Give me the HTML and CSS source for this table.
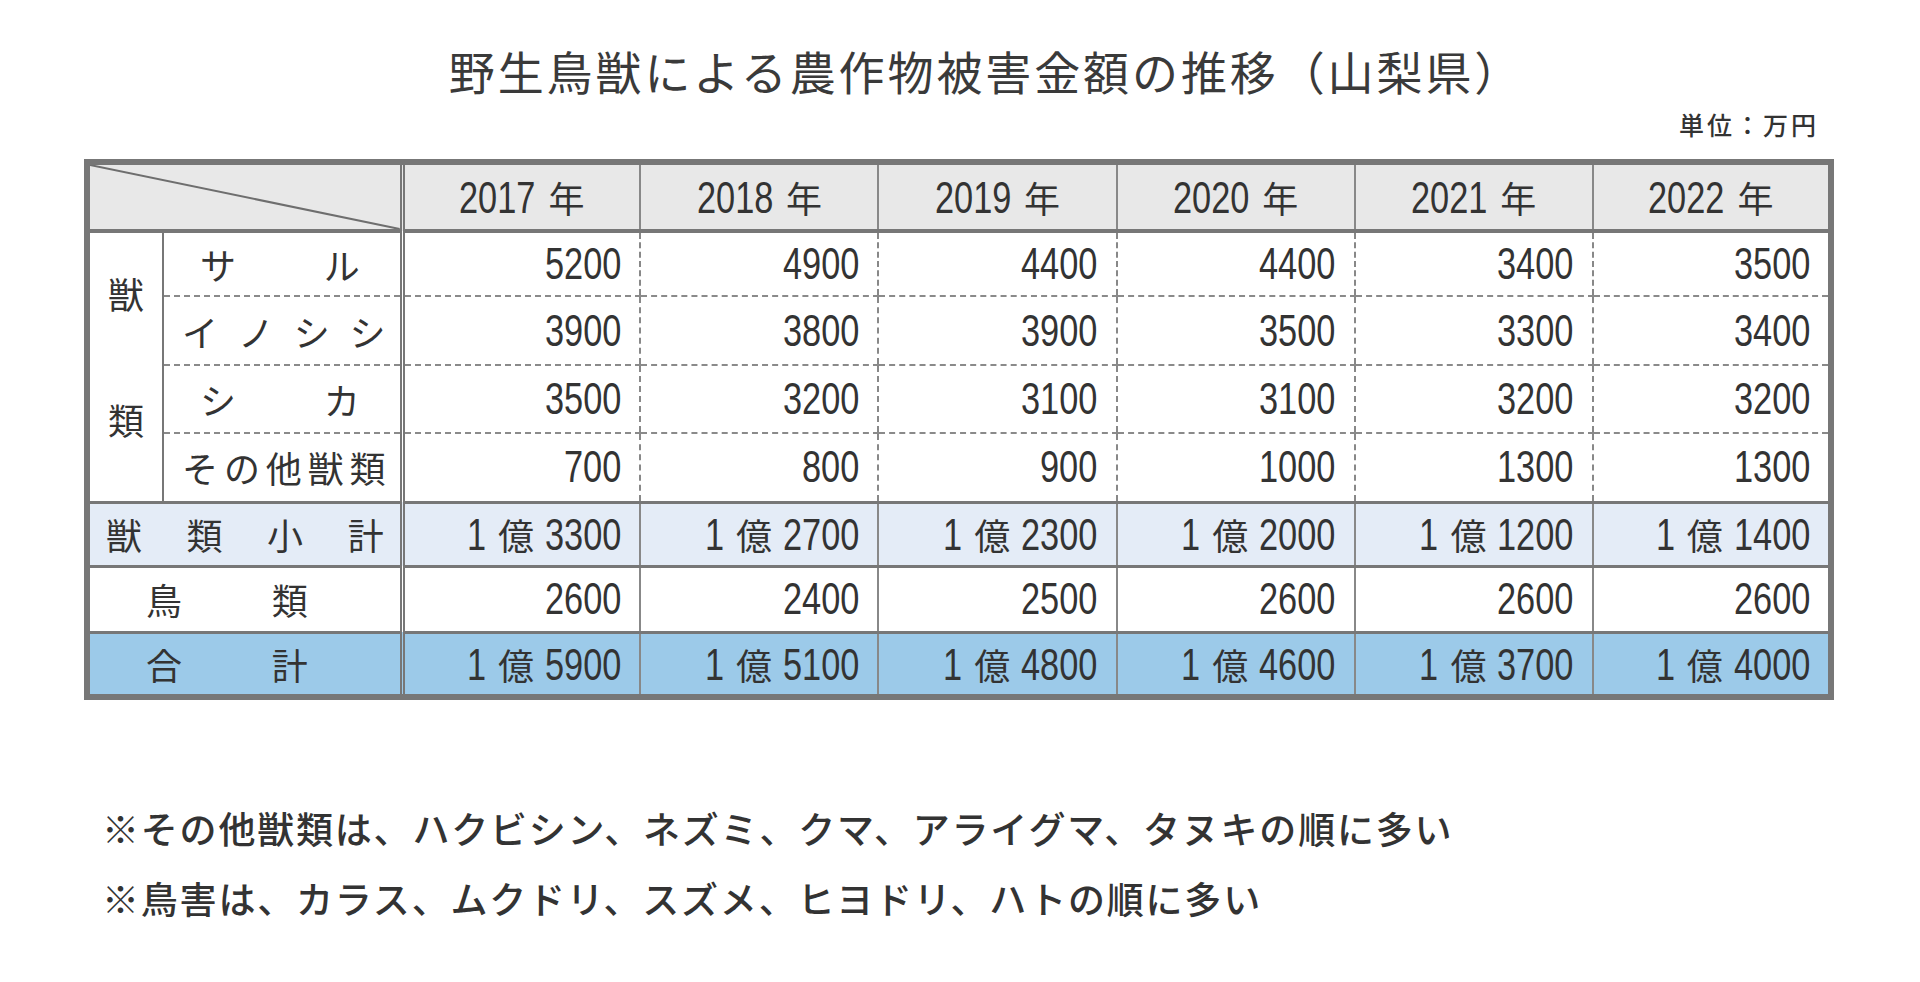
FILE: index.html
```html
<!DOCTYPE html>
<html lang="ja">
<head>
<meta charset="utf-8">
<title>野生鳥獣による農作物被害金額の推移（山梨県）</title>
<link rel="stylesheet" href="styles.css">
</head>
<body>
<div class="page">
  <h1 class="title">野生鳥獣による農作物被害金額の推移（山梨県）</h1>
  <div class="unit">単位：万円</div>
  <table class="damage">
    <colgroup>
      <col class="c-grp"><col class="c-lbl">
      <col class="c-year"><col class="c-year"><col class="c-year"><col class="c-year"><col class="c-year"><col class="c-year">
    </colgroup>
    <thead>
      <tr class="r-head">
        <th colspan="2" class="corner">
          <svg class="diag" viewBox="0 0 100 100" preserveAspectRatio="none"><line x1="0" y1="0" x2="100" y2="100" vector-effect="non-scaling-stroke"/></svg>
        </th>
        <th class="year"><span class="n d4">2017</span><span class="nen">年</span></th>
        <th class="year"><span class="n d4">2018</span><span class="nen">年</span></th>
        <th class="year"><span class="n d4">2019</span><span class="nen">年</span></th>
        <th class="year"><span class="n d4">2020</span><span class="nen">年</span></th>
        <th class="year"><span class="n d4">2021</span><span class="nen">年</span></th>
        <th class="year"><span class="n d4">2022</span><span class="nen">年</span></th>
      </tr>
    </thead>
    <tbody>
      <tr class="r-animal r1">
        <th rowspan="4" class="grp"><div class="grp-in"><span>獣</span><span>類</span></div></th>
        <th class="lbl"><div class="spread sp-2"><span>サ</span><span>ル</span></div></th>
        <td class="num"><span class="n d4">5200</span></td><td class="num"><span class="n d4">4900</span></td><td class="num"><span class="n d4">4400</span></td><td class="num"><span class="n d4">4400</span></td><td class="num"><span class="n d4">3400</span></td><td class="num"><span class="n d4">3500</span></td>
      </tr>
      <tr class="r-animal r2">
        <th class="lbl"><div class="spread sp-4"><span>イ</span><span>ノ</span><span>シ</span><span>シ</span></div></th>
        <td class="num"><span class="n d4">3900</span></td><td class="num"><span class="n d4">3800</span></td><td class="num"><span class="n d4">3900</span></td><td class="num"><span class="n d4">3500</span></td><td class="num"><span class="n d4">3300</span></td><td class="num"><span class="n d4">3400</span></td>
      </tr>
      <tr class="r-animal r3">
        <th class="lbl"><div class="spread sp-2"><span>シ</span><span>カ</span></div></th>
        <td class="num"><span class="n d4">3500</span></td><td class="num"><span class="n d4">3200</span></td><td class="num"><span class="n d4">3100</span></td><td class="num"><span class="n d4">3100</span></td><td class="num"><span class="n d4">3200</span></td><td class="num"><span class="n d4">3200</span></td>
      </tr>
      <tr class="r-animal r4">
        <th class="lbl"><div class="spread sp-4"><span>そ</span><span>の</span><span>他</span><span>獣</span><span>類</span></div></th>
        <td class="num"><span class="n d3">700</span></td><td class="num"><span class="n d3">800</span></td><td class="num"><span class="n d3">900</span></td><td class="num"><span class="n d4">1000</span></td><td class="num"><span class="n d4">1300</span></td><td class="num"><span class="n d4">1300</span></td>
      </tr>
      <tr class="r-sub">
        <th colspan="2" class="lbl"><div class="spread sp-sub"><span>獣</span><span>類</span><span>小</span><span>計</span></div></th>
        <td class="num"><span class="n d1">1</span><span class="oku">億</span><span class="n d4">3300</span></td>
        <td class="num"><span class="n d1">1</span><span class="oku">億</span><span class="n d4">2700</span></td>
        <td class="num"><span class="n d1">1</span><span class="oku">億</span><span class="n d4">2300</span></td>
        <td class="num"><span class="n d1">1</span><span class="oku">億</span><span class="n d4">2000</span></td>
        <td class="num"><span class="n d1">1</span><span class="oku">億</span><span class="n d4">1200</span></td>
        <td class="num"><span class="n d1">1</span><span class="oku">億</span><span class="n d4">1400</span></td>
      </tr>
      <tr class="r-bird">
        <th colspan="2" class="lbl"><div class="spread sp-pair"><span>鳥</span><span>類</span></div></th>
        <td class="num"><span class="n d4">2600</span></td><td class="num"><span class="n d4">2400</span></td><td class="num"><span class="n d4">2500</span></td><td class="num"><span class="n d4">2600</span></td><td class="num"><span class="n d4">2600</span></td><td class="num"><span class="n d4">2600</span></td>
      </tr>
      <tr class="r-total">
        <th colspan="2" class="lbl"><div class="spread sp-pair"><span>合</span><span>計</span></div></th>
        <td class="num"><span class="n d1">1</span><span class="oku">億</span><span class="n d4">5900</span></td>
        <td class="num"><span class="n d1">1</span><span class="oku">億</span><span class="n d4">5100</span></td>
        <td class="num"><span class="n d1">1</span><span class="oku">億</span><span class="n d4">4800</span></td>
        <td class="num"><span class="n d1">1</span><span class="oku">億</span><span class="n d4">4600</span></td>
        <td class="num"><span class="n d1">1</span><span class="oku">億</span><span class="n d4">3700</span></td>
        <td class="num"><span class="n d1">1</span><span class="oku">億</span><span class="n d4">4000</span></td>
      </tr>
    </tbody>
  </table>
  <div class="notes">
    <p>※その他獣類は、ハクビシン、ネズミ、クマ、アライグマ、タヌキの順に多い</p>
    <p>※鳥害は、カラス、ムクドリ、スズメ、ヒヨドリ、ハトの順に多い</p>
  </div>
</div>
</body>
</html>
```
FILE: styles.css
```css
html, body {
  margin: 0;
  padding: 0;
  background: #ffffff;
}
body {
  font-family: "Noto Sans CJK JP", "Noto Sans", sans-serif;
  color: #333333;
}
.page {
  width: 1920px;
  padding-top: 40px;
}
.title {
  margin: 0;
  font-size: 46px;
  line-height: 60px;
  font-weight: 400;
  letter-spacing: 2.9px;
  text-align: center;
  padding-left: 52px;
  color: #3a3a3a;
}
.unit {
  margin-top: 9px;
  font-size: 25px;
  line-height: 30px;
  letter-spacing: 3px;
  text-align: right;
  padding-right: 101px;
  font-weight: 500;
}
.damage {
  margin-top: 20px;
  margin-left: 84px;
  border-collapse: collapse;
  border: 6px solid #777777;
  table-layout: fixed;
  width: 1750px;
}
.c-grp { width: 76px; }
.c-lbl { width: 239px; }
.c-year { width: 238px; }

.damage th, .damage td {
  padding: 0;
  font-weight: 400;
  vertical-align: middle;
}
.r-head th {
  background: #e8e8e8;
  height: 64px;
  border-bottom: 4px solid #777777;
}
.corner {
  position: relative;
  border-right: 5px double #777777;
}
.diag {
  position: absolute;
  left: 0;
  top: 0;
  width: 100%;
  height: 100%;
}
.diag line {
  stroke: #6e6e6e;
  stroke-width: 2;
}

/* condensed digits */
.n {
  display: inline-block;
  font-family: "Liberation Sans", Arial, sans-serif;
  font-size: 44px;
  white-space: nowrap;
  text-align: left;
  transform: scaleX(0.78);
  transform-origin: left center;
}
.d1 { width: 19.1px; }
.d3 { width: 57.3px; }
.d4 { width: 76.3px; }

.year {
  border-left: 2px solid #888888;
  text-align: center;
  color: #333333;
  white-space: nowrap;
}
.nen, .oku {
  font-family: "Noto Sans CJK JP", sans-serif;
  font-size: 36px;
}
.nen { margin-left: 13px; }
.oku { margin: 0 11px 0 12px; }

.num {
  text-align: right;
  padding-right: 18px !important;
  border-left: 2px solid #888888;
  white-space: nowrap;
}
.r-animal .num { border-left-style: dashed; }
.r-animal th.lbl + .num { border-left: 5px double #777777; }
.r-sub .num, .r-bird .num, .r-total .num { border-left: 2px solid #888888; }
.r-sub th.lbl + .num, .r-bird th.lbl + .num, .r-total th.lbl + .num { border-left: 5px double #777777; }

.r-animal td, .r-animal .lbl {
  border-bottom: 2px dashed #8a8a8a;
}
.r1 { height: 65px; }
.r2 { height: 69px; }
.r3 { height: 68px; }
.r4 { height: 69px; }
.r4 td, .r4 .lbl { border-bottom: 3px solid #777777; }
.grp {
  border-right: 2px solid #777777;
  border-bottom: 3px solid #777777;
}
.grp-in {
  display: flex;
  flex-direction: column;
  align-items: center;
  gap: 86px;
  padding-bottom: 22px;
  font-size: 36px;
  line-height: 40px;
}
.lbl {
  font-size: 36px;
  line-height: 40px;
  border-right: 5px double #777777;
}
.spread {
  display: flex;
  justify-content: space-between;
}
.sp-2 { padding: 0 40px 0 36px; }
.sp-4 { padding: 0 14px 0 18px; }
.sp-sub { padding: 0 16px 0 16px; }
.sp-pair { padding: 0 92px 0 56px; }

.r-sub { height: 64px; }
.r-sub th, .r-sub td {
  background: #e4ecf7;
  border-bottom: 3px solid #777777;
}
.r-bird { height: 66px; }
.r-bird th, .r-bird td {
  background: #ffffff;
  border-bottom: 3px solid #777777;
}
.r-total { height: 65px; }
.r-total th, .r-total td {
  background: #9ccae9;
}

.notes {
  margin-top: 93px;
  padding-left: 102px;
}
.notes p {
  margin: 0;
  font-size: 37px;
  line-height: 70px;
  letter-spacing: 1.8px;
  font-weight: 500;
  color: #333333;
}
```
